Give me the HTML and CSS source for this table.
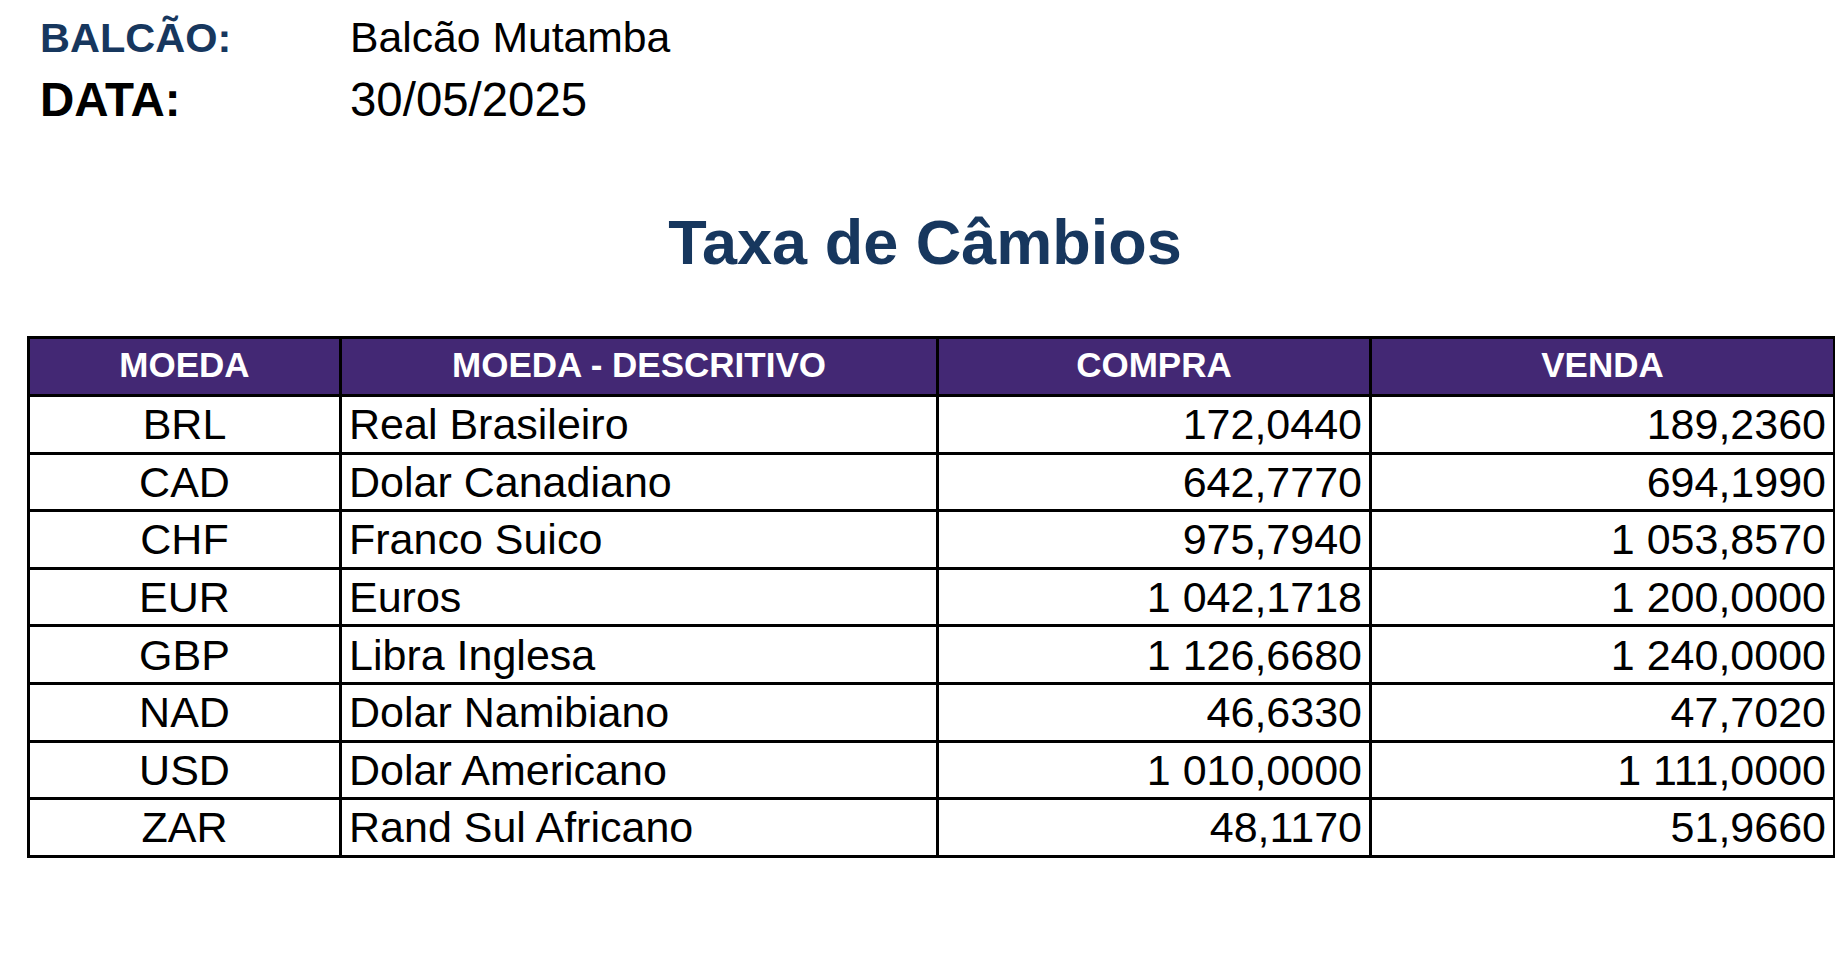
FILE: index.html
```html
<!DOCTYPE html>
<html lang="pt">
<head>
<meta charset="utf-8">
<title>Taxa de Câmbios</title>
<link rel="stylesheet" href="styles.css">
</head>
<body>
<div class="info">
  <div class="info-row row-balcao">
    <span class="label label-navy">BALCÃO:</span>
    <span class="value">Balcão Mutamba</span>
  </div>
  <div class="info-row row-data">
    <span class="label">DATA:</span>
    <span class="value">30/05/2025</span>
  </div>
</div>
<div class="title-wrap">
  <h1 class="title">Taxa de Câmbios</h1>
</div>
<table class="rates">
  <colgroup>
    <col class="c1"><col class="c2"><col class="c3"><col class="c4">
  </colgroup>
  <thead>
    <tr><th>MOEDA</th><th>MOEDA - DESCRITIVO</th><th>COMPRA</th><th>VENDA</th></tr>
  </thead>
  <tbody>
    <tr><td class="code">BRL</td><td class="desc">Real Brasileiro</td><td class="num">172,0440</td><td class="num">189,2360</td></tr>
    <tr><td class="code">CAD</td><td class="desc">Dolar Canadiano</td><td class="num">642,7770</td><td class="num">694,1990</td></tr>
    <tr><td class="code">CHF</td><td class="desc">Franco Suico</td><td class="num">975,7940</td><td class="num">1 053,8570</td></tr>
    <tr><td class="code">EUR</td><td class="desc">Euros</td><td class="num">1 042,1718</td><td class="num">1 200,0000</td></tr>
    <tr><td class="code">GBP</td><td class="desc">Libra Inglesa</td><td class="num">1 126,6680</td><td class="num">1 240,0000</td></tr>
    <tr><td class="code">NAD</td><td class="desc">Dolar Namibiano</td><td class="num">46,6330</td><td class="num">47,7020</td></tr>
    <tr><td class="code">USD</td><td class="desc">Dolar Americano</td><td class="num">1 010,0000</td><td class="num">1 111,0000</td></tr>
    <tr><td class="code">ZAR</td><td class="desc">Rand Sul Africano</td><td class="num">48,1170</td><td class="num">51,9660</td></tr>
  </tbody>
</table>
</body>
</html>
```
FILE: styles.css
```css
html, body {
  margin: 0;
  padding: 0;
  background: #ffffff;
}
body {
  font-family: "Liberation Sans", Arial, sans-serif;
  color: #000000;
  width: 1835px;
}
.info {
  padding: 7px 0 0 40px;
}
.info-row {
  display: flex;
  align-items: baseline;
}
.row-balcao {
  height: 61px;
  line-height: 60px;
}
.row-data {
  height: 64px;
  line-height: 64px;
}
.label {
  width: 310px;
  font-weight: bold;
}
.row-balcao .label { font-size: 41.5px; }
.row-balcao .value { font-size: 42.7px; }
.row-data .label { font-size: 47.5px; }
.row-data .value { font-size: 47.4px; }
.label-navy {
  color: #17375e;
}
.title-wrap {
  width: 1808px;
  margin-left: 26px;
  padding-right: 10px;
  box-sizing: border-box;
}
.title {
  margin: 74px 0 0 0;
  font-size: 63px;
  line-height: 72px;
  font-weight: bold;
  color: #17375e;
  text-align: center;
}
.rates {
  margin: 58px 0 0 27px;
  border-collapse: collapse;
  table-layout: fixed;
  width: 1806px;
}
.c1 { width: 312px; }
.c2 { width: 597px; }
.c3 { width: 433px; }
.c4 { width: 464px; }
.rates th,
.rates td {
  border: 3px solid #000000;
  padding: 0 7px;
  white-space: nowrap;
}
.rates th {
  background: #432874;
  color: #ffffff;
  font-size: 35px;
  font-weight: bold;
  height: 51px;
  padding-bottom: 4px;
  text-align: center;
  line-height: 40px;
}
.rates td {
  font-size: 43px;
  height: 54.6px;
  line-height: 46px;
}
.code { text-align: center; }
.desc { text-align: left; }
.num { text-align: right; }
```
